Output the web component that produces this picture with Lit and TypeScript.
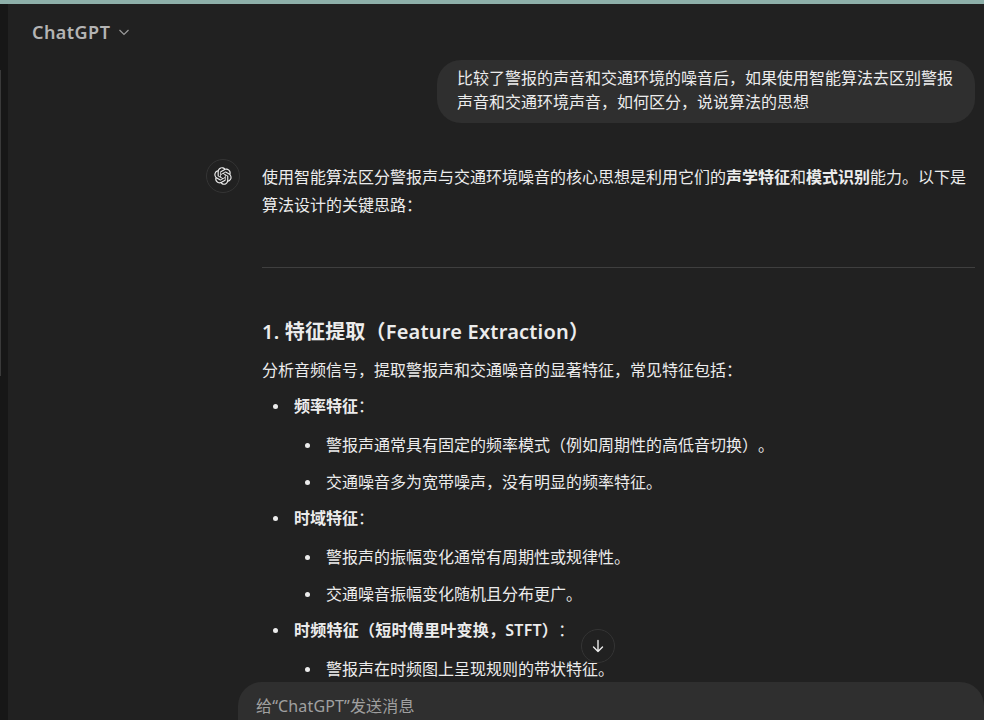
import { LitElement, html, css, svg } from "lit";
import { customElement } from "lit/decorators.js";

const LOGO = "M37.5324 16.8707C37.9808 15.5241 38.1363 14.0974 37.9886 12.6859C37.8409 11.2744 37.3934 9.91076 36.676 8.68622C35.6126 6.83404 33.9882 5.3676 32.0373 4.4985C30.0864 3.62941 27.9098 3.40259 25.8215 3.85078C24.8796 2.7893 23.7219 1.94125 22.4257 1.36341C21.1295 0.785575 19.7249 0.491269 18.3058 0.500197C16.1708 0.495044 14.0893 1.16803 12.3614 2.42214C10.6335 3.67624 9.34853 5.44666 8.6917 7.47815C7.30085 7.76286 5.98686 8.3414 4.8377 9.17505C3.68854 10.0087 2.73073 11.0782 2.02839 12.312C0.956464 14.1591 0.498905 16.2988 0.721698 18.4228C0.944492 20.5467 1.83612 22.5449 3.268 24.1293C2.81966 25.4759 2.66413 26.9026 2.81182 28.3141C2.95951 29.7256 3.40701 31.0892 4.12437 32.3138C5.18791 34.1659 6.8123 35.6322 8.76321 36.5013C10.7141 37.3704 12.8907 37.5973 14.9789 37.1492C15.9208 38.2107 17.0786 39.0587 18.3747 39.6366C19.6709 40.2144 21.0755 40.5087 22.4946 40.4998C24.6307 40.5054 26.7133 39.8321 28.4418 38.5772C30.1704 37.3223 31.4556 35.5506 32.1119 33.5179C33.5027 33.2332 34.8167 32.6547 35.9659 31.821C37.115 30.9874 38.0728 29.9178 38.7752 28.684C39.8458 26.8371 40.3023 24.6979 40.0789 22.5748C39.8556 20.4517 38.9639 18.4544 37.5324 16.8707ZM22.4978 37.8849C20.7443 37.8874 19.0459 37.2733 17.6994 36.1501C17.7601 36.117 17.8666 36.0586 17.936 36.0161L25.9004 31.4156C26.1003 31.3019 26.2663 31.137 26.3813 30.9378C26.4964 30.7386 26.5563 30.5124 26.5549 30.2825V19.0542L29.9213 20.998C29.9389 21.0068 29.9541 21.0198 29.9656 21.0359C29.977 21.052 29.9842 21.0707 29.9867 21.0902V30.3889C29.9842 32.375 29.1946 34.2791 27.7909 35.6841C26.3872 37.0892 24.4838 37.8806 22.4978 37.8849ZM6.39227 31.0064C5.51397 29.4888 5.19742 27.7107 5.49804 25.9832C5.55718 26.0187 5.66048 26.0818 5.73461 26.1244L13.699 30.7248C13.8975 30.8408 14.1233 30.902 14.3532 30.902C14.583 30.902 14.8088 30.8408 15.0073 30.7248L24.731 25.1103V28.9979C24.7321 29.0177 24.7283 29.0376 24.7199 29.0556C24.7115 29.0736 24.6988 29.0893 24.6829 29.1012L16.6317 33.7497C14.9096 34.7416 12.8643 35.0097 10.9447 34.4954C9.02506 33.9811 7.38785 32.7263 6.39227 31.0064ZM4.29707 13.6194C5.17156 12.0998 6.55279 10.9364 8.19885 10.3327C8.19885 10.4013 8.19491 10.5228 8.19491 10.6071V19.808C8.19351 20.0378 8.25334 20.2638 8.36823 20.4629C8.48312 20.6619 8.64893 20.8267 8.84863 20.9404L18.5723 26.5542L15.206 28.4979C15.1894 28.5089 15.1703 28.5155 15.1505 28.5173C15.1307 28.5191 15.1107 28.516 15.0924 28.5082L7.04046 23.8557C5.32135 22.8601 4.06716 21.2235 3.55289 19.3046C3.03862 17.3858 3.30624 15.3413 4.29707 13.6194ZM31.955 20.0556L22.2312 14.4411L25.5976 12.4981C25.6142 12.4872 25.6333 12.4805 25.6531 12.4787C25.6729 12.4769 25.6928 12.4801 25.7111 12.4879L33.7631 17.1364C34.9967 17.849 36.0017 18.8982 36.6606 20.1613C37.3194 21.4244 37.6047 22.849 37.4832 24.2684C37.3617 25.6878 36.8382 27.0432 35.9743 28.1759C35.1103 29.3086 33.9415 30.1717 32.6047 30.6641C32.6047 30.5947 32.6047 30.4733 32.6047 30.3889V21.188C32.6066 20.9586 32.5474 20.7328 32.4332 20.5338C32.319 20.3348 32.154 20.1698 31.955 20.0556ZM35.3055 15.0128C35.2464 14.9765 35.1431 14.9142 35.069 14.8717L27.1045 10.2712C26.906 10.1554 26.6803 10.0943 26.4504 10.0943C26.2206 10.0943 25.9948 10.1554 25.7963 10.2712L16.0726 15.8858V11.9982C16.0715 11.9783 16.0753 11.9585 16.0837 11.9405C16.0921 11.9225 16.1048 11.9068 16.1207 11.8949L24.1719 7.25025C25.4053 6.53903 26.8158 6.19376 28.2383 6.25482C29.6608 6.31589 31.0364 6.78077 32.2044 7.59508C33.3723 8.40939 34.2842 9.53945 34.8334 10.8531C35.3826 12.1667 35.5464 13.6095 35.3055 15.0128ZM14.2424 21.9419L10.8752 19.9981C10.8576 19.9893 10.8423 19.9763 10.8309 19.9602C10.8195 19.9441 10.8122 19.9254 10.8098 19.9058V10.6071C10.8107 9.18295 11.2173 7.78848 11.9819 6.58696C12.7466 5.38544 13.8377 4.42659 15.1275 3.82264C16.4173 3.21869 17.8524 2.99464 19.2649 3.1767C20.6775 3.35876 22.0089 3.93941 23.1034 4.85067C23.0427 4.88379 22.937 4.94215 22.8668 4.98473L14.9024 9.58517C14.7025 9.69878 14.5366 9.86356 14.4215 10.0626C14.3065 10.2616 14.2466 10.4877 14.2479 10.7175L14.2424 21.9419ZM16.071 17.9991L20.4018 15.4978L24.7325 17.9975V22.9985L20.4018 25.4983L16.071 22.9985V17.9991Z";

@customElement("app-root")
export class AppRoot extends LitElement {
  static styles = css`
    :host {
      display: block;
      width: 984px;
      height: 720px;
      overflow: hidden;
      background: #212121;
      font-family: "Noto Sans", "Noto Sans CJK SC", sans-serif;
      color: #ececec;
      font-size: 16px;
      text-spacing-trim: space-all;
    }
    .strip { height: 4px; background: #8eb0aa; }
    .shell { display: flex; height: 716px; }
    .rail {
      width: 8px;
      flex: none;
      background: #171717;
      position: relative;
    }
    .rail-line {
      position: absolute;
      left: 0;
      top: 66px;
      width: 1px;
      height: 306px;
      background: #3a3a3a;
    }
    .main {
      flex: 1;
      min-width: 0;
      position: relative;
      overflow: hidden;
    }
    .header {
      display: flex;
      align-items: center;
      gap: 8px;
      height: 56px;
      padding-left: 24px;
      font-size: 18px;
      letter-spacing: 0.45px;
      font-weight: 600;
      color: #b4b4b4;
    }
    .thread {
      padding: 0 9px 0 0;
      display: flex;
      flex-direction: column;
    }
    .user {
      align-self: flex-end;
      width: 538px;
      box-sizing: border-box;
      padding: 6px 20px 9px;
      background: #2f2f2f;
      border-radius: 24px;
      line-height: 24px;
      font-size: 16px;
    }
    .assistant {
      display: flex;
      margin-top: 36px;
      padding-left: 198px;
      gap: 22px;
    }
    .avatar {
      flex: none;
      width: 34px;
      height: 34px;
      box-sizing: border-box;
      border: 1px solid #343434;
      border-radius: 50%;
      display: flex;
      align-items: center;
      justify-content: center;
    }
    .body { flex: 1; min-width: 0; line-height: 28px; padding-top: 4px; }
    .body p { margin: 0; }
    hr { border: none; border-top: 1px solid #3f3f3f; margin: 48px 0 48px; }
    h3 {
      margin: 0 0 8px;
      font-size: 20px;
      font-weight: 600;
      line-height: 32px;
      letter-spacing: 0.2px;
    }
    ul { margin: 0; padding: 0; list-style: none; }
    li { position: relative; }
    .l1 { padding-left: 32px; margin-top: 8px; }
    .l2 { padding-left: 32px; margin-top: 9px; }
    .sub { margin-top: 11px; }
    .l1::before, .l2::before {
      content: "";
      position: absolute;
      top: 12px;
      left: 11px;
      width: 5px;
      height: 5px;
      border-radius: 50%;
      background: #ececec;
    }
    b { font-weight: 600; }
    .wide { letter-spacing: 0.25px; }
    .down {
      position: absolute;
      left: 573px;
      top: 625px;
      width: 34px;
      height: 34px;
      box-sizing: border-box;
      border-radius: 50%;
      border: 1px solid #343434;
      background: #212121;
      display: flex;
      align-items: center;
      justify-content: center;
    }
    .composer {
      position: absolute;
      left: 230px;
      right: 0;
      top: 678px;
      height: 60px;
      background: #2f2f2f;
      border-radius: 24px 24px 0 0;
      padding: 10px 18px;
      box-sizing: border-box;
      color: #a0a0a0;
      line-height: 28px;
      letter-spacing: 0.15px;
    }
  `;

  render() {
    return html`
      <div class="strip"></div>
      <div class="shell">
        <div class="rail"><div class="rail-line"></div></div>
        <div class="main">
          <div class="header">
            ChatGPT
            <svg width="12" height="12" viewBox="0 0 12 12" fill="none" stroke="#9b9b9b" stroke-width="1.2"><path d="M1.5 4l4.5 4.5L10.500 4"/></svg>
          </div>
          <div class="thread">
            <div class="user">比较了警报的声音和交通环境的噪音后\uFF0C如果使用智能算法去区别警报声音和交通环境声音\uFF0C如何区分\uFF0C说说算法的思想</div>
            <div class="assistant">
              <div class="avatar">
                <svg width="18" height="18" viewBox="0 0 41 41">${svg`<path d=${LOGO} fill="#ececec"/>`}</svg>
              </div>
              <div class="body">
                <p>使用智能算法区分警报声与交通环境噪音的核心思想是利用它们的<b>声学特征</b>和<b>模式识别</b>能力。以下是算法设计的关键思路\uFF1A</p>
                <hr />
                <h3>1. 特征提取\uFF08Feature Extraction\uFF09</h3>
                <p>分析音频信号\uFF0C提取警报声和交通噪音的显著特征\uFF0C常见特征包括\uFF1A</p>
                <ul>
                  <li class="l1"><b>频率特征</b>\uFF1A
                    <ul class="sub">
                      <li class="l2">警报声通常具有固定的频率模式\uFF08例如周期性的高低音切换\uFF09。</li>
                      <li class="l2">交通噪音多为宽带噪声\uFF0C没有明显的频率特征。</li>
                    </ul>
                  </li>
                  <li class="l1"><b>时域特征</b>\uFF1A
                    <ul class="sub">
                      <li class="l2">警报声的振幅变化通常有周期性或规律性。</li>
                      <li class="l2">交通噪音振幅变化随机且分布更广。</li>
                    </ul>
                  </li>
                  <li class="l1"><b class="wide">时频特征\uFF08短时傅里叶变换\uFF0CSTFT\uFF09</b>\uFF1A
                    <ul class="sub">
                      <li class="l2">警报声在时频图上呈现规则的带状特征。</li>
                      <li class="l2">交通噪音的时频图则较为杂乱。</li>
                    </ul>
                  </li>
                </ul>
              </div>
            </div>
          </div>
          <div class="down">
            <svg width="16" height="16" viewBox="0 0 16 16" fill="none" stroke="#ececec" stroke-width="1.4" stroke-linecap="round" stroke-linejoin="round"><path d="M8 2.500v11M3.500 9L8 13.500 12.500 9"/></svg>
          </div>
          <div class="composer">给\u201CChatGPT\u201D发送消息</div>
        </div>
      </div>
    `;
  }
}
